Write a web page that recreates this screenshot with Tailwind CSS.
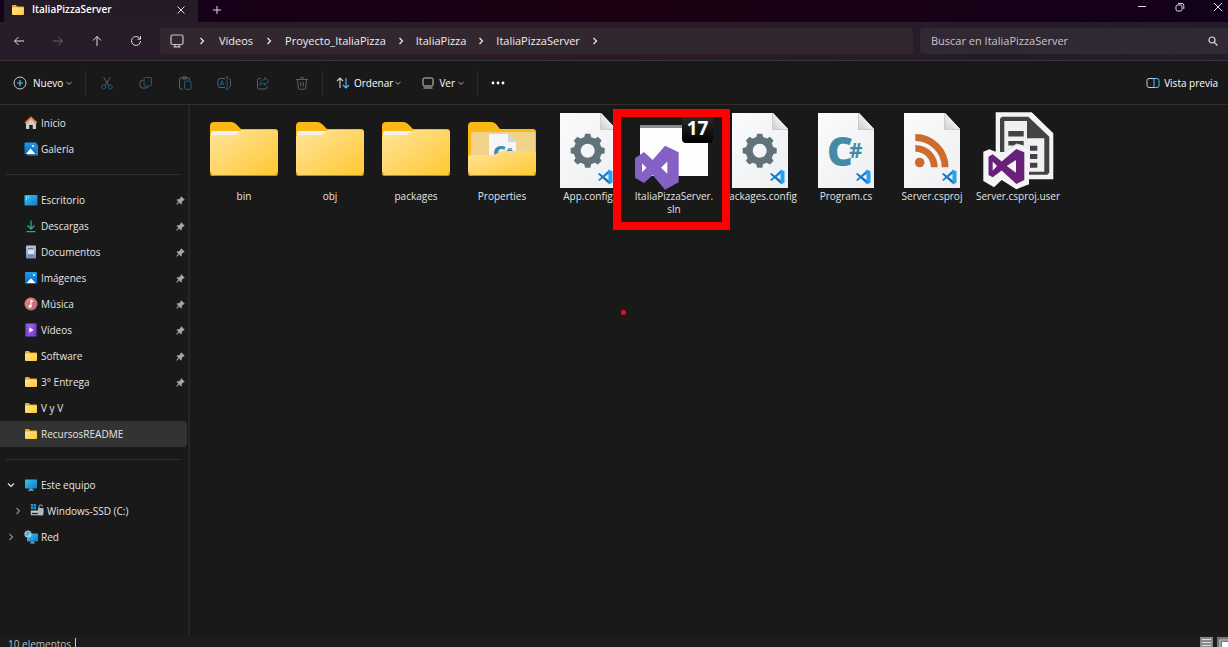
<!DOCTYPE html>
<html lang="es">
<head>
<meta charset="utf-8">
<title>ItaliaPizzaServer</title>
<script src="https://cdn.jsdelivr.net/npm/@tailwindcss/browser@4"></script>
</head>
<body class="flex h-screen flex-col overflow-hidden bg-[#191919] font-['Open_Sans','Noto_Sans',sans-serif] text-[10px] text-[#e4e4e4]">

<svg class="absolute size-0" aria-hidden="true">
  <defs>
    <linearGradient id="gFolder" x1="0" y1="0" x2="1" y2="1"><stop offset="0" stop-color="#ffe59c"/><stop offset="1" stop-color="#ffc730"/></linearGradient>
    <linearGradient id="gPaper" x1="0" y1="0" x2="1" y2="1"><stop offset="0" stop-color="#fbfbfc"/><stop offset="1" stop-color="#eeeff1"/></linearGradient>
    <linearGradient id="gFold" x1="0" y1="1" x2="1" y2="0"><stop offset="0" stop-color="#cfcfcf"/><stop offset=".6" stop-color="#f4f4f4"/></linearGradient>
    <linearGradient id="gBlue" x1="0" y1="0" x2="1" y2="1"><stop offset="0" stop-color="#35c8e8"/><stop offset="1" stop-color="#1277cf"/></linearGradient>
    <linearGradient id="gPic" x1="0" y1="0" x2="0" y2="1"><stop offset="0" stop-color="#1f9bea"/><stop offset="1" stop-color="#0a66c0"/></linearGradient>
    <linearGradient id="gMusic" x1="0" y1="0" x2="1" y2="1"><stop offset="0" stop-color="#f2895a"/><stop offset="1" stop-color="#a9609c"/></linearGradient>
    <linearGradient id="gVideo" x1="0" y1="0" x2="1" y2="1"><stop offset="0" stop-color="#a566ec"/><stop offset="1" stop-color="#7a3bd6"/></linearGradient>
    <linearGradient id="gDoc" x1="0" y1="0" x2="0" y2="1"><stop offset="0" stop-color="#b5c7dc"/><stop offset="1" stop-color="#768fae"/></linearGradient>
    <linearGradient id="gBadge" x1="0" y1="0" x2="0" y2="1"><stop offset="0" stop-color="#333"/><stop offset="1" stop-color="#000"/></linearGradient>
  </defs>
  <symbol id="folder" viewBox="0 0 86 80">
    <path d="M9 16q0-4 4-4h17q3 0 5 2l5 5h34q3 0 3 3v20H9z" fill="#fbb915"/>
    <path d="M11 23q0-2 2-2h27l-4 4-25 2z" fill="#f3f1ee"/>
    <path d="M10 23q0-2 2-2h28l-6 5-24 4z" fill="#f3f1ee"/>
    <path d="M9 28q0-3 3-3h21q2 0 3-1l3-3q1-1 3-1h32q3 0 3 3v40q0 3-3 3H12q-3 0-3-3z" fill="url(#gFolder)"/>
    <path d="M9.500 62q0 3.500 3 3.500h61q3 0 3-3.500" fill="none" stroke="#b98a1c"/>
  </symbol>
  <symbol id="folderFull" viewBox="0 0 86 80">
    <path d="M9 16q0-4 4-4h19q3 0 5 2l4 5h33q3 0 3 3v30H9z" fill="#fbb915"/>
    <path d="M12 24q0-2 2-2h60q2 0 2 2v22H12z" fill="#f1d28a"/>
    <path d="M30 24h19l8 8v16H30z" fill="#f5f6f7"/><path d="M49 24v8h8z" fill="#d2d4d6"/>
    <text x="34" y="50" font-size="20" font-weight="800" fill="#448ba8">C</text>
    <text x="47" y="46" font-size="10" font-weight="800" fill="#448ba8">#</text>
    <path d="M9 48q0-3 3-3h21q2 0 4-1l3-2q1-1 3-1h31q3 0 3 3v19q0 3-3 3H12q-3 0-3-3z" fill="url(#gFolder)"/>
    <path d="M9.500 62q0 3.500 3 3.500h61q3 0 3-3.500" fill="none" stroke="#b98a1c"/>
  </symbol>
  <symbol id="vscode" viewBox="0 0 16 16">
    <path d="M1 5l1.300-1L12 11.500V15z" fill="#0a6fc0"/><path d="M1 11l1.300 1L12 4.500V1z" fill="#1384d8"/>
    <path d="M11.500.500L15.500 2.200v11.600L11.500 15.500z" fill="#27a0f0"/>
  </symbol>
  <symbol id="paper" viewBox="0 0 86 80">
    <path d="M15 3h41l15 16v59H15z" fill="url(#gPaper)"/>
    <path d="M56 3l15 16H56z" fill="url(#gFold)"/><path d="M55.500 3v16.500H71" fill="none" stroke="#c2c2c2" stroke-width=".8"/>
    <path d="M56.500 2l16 17V2z" fill="#191919"/>
    <use href="#vscode" x="52" y="59" width="16" height="16"/>
  </symbol>
  <symbol id="config" viewBox="0 0 86 80">
    <use href="#paper" width="86" height="80"/>
    <g fill="#62727a" transform="translate(42.700 40.700)">
      <circle r="10.500" fill="none" stroke="#62727a" stroke-width="7"/>
      <g id="teeth"><path d="M-3.600-13l1-4h5.200l1 4zM-3.600 13l1 4h5.200l1-4z"/><path d="M-13-3.600l-4 1v5.200l4 1zM13-3.600l4 1v5.200l-4 1z"/></g>
      <use href="#teeth" transform="rotate(45)"/>
    </g>
  </symbol>
  <symbol id="csharp" viewBox="0 0 86 80">
    <use href="#paper" width="86" height="80"/>
    <text x="24" y="56" font-size="40" font-weight="800" fill="#448ba8">C</text>
    <text x="46" y="48" font-size="21" font-weight="700" fill="#448ba8">#</text>
  </symbol>
  <symbol id="rss" viewBox="0 0 86 80">
    <use href="#paper" width="86" height="80"/>
    <circle cx="30.700" cy="52.500" r="4.800" fill="#cc6d2e"/>
    <path d="M26.300 38.300a19 19 0 0 1 19 19M26.300 27.500a29.800 29.800 0 0 1 29.800 29.800" fill="none" stroke="#cc6d2e" stroke-width="6.800"/>
  </symbol>
  <symbol id="sln" viewBox="0 0 86 80">
    <path d="M9 15h68v51H9z" fill="#fdfdfd"/><path d="M9 15h68v3H9z" fill="#8b8b8f"/>
    <rect x="51" y="2" width="31" height="31" rx="4" fill="url(#gBadge)"/>
    <text x="66.500" y="25" text-anchor="middle" font-size="19" font-weight="700" fill="#fff">17</text>
    <path fill-rule="evenodd" fill="#8661c5" d="M34 35.700l13.700 6.600v30L34 79.700 21.700 65 13 73l-9-5.300V48.300L13 42l8.700 8z"/>
    <path d="M11 53.300l4.500 4.500-4.500 4.500zM36.300 51.500L30 57.700l6.300 6z" fill="#fff"/>
  </symbol>
  <symbol id="user" viewBox="0 0 86 80">
    <path d="M20.700 2.300h36l21.600 21v46H54v5l-12.700 5L26.700 70 19 77.300 8.300 71V41.700l6-2.400 6.400 2.400z" fill="#f4f4f5"/>
    <path d="M27 6.700h26.300l21 20v36l-2 2H54V40l-12.700-5L25 46V8.700z" fill="#424244"/>
    <path d="M29.300 11H52v17.300h17.300v33.400H52V40l-10.700-6-12 9z" fill="#f0eff1"/>
    <path d="M20.700 42h9.600l11-8L54 39.500V70L41 78z" fill="#f4f4f5"/>
    <path d="M33.300 21h15.400v5.500H33.300zM33.300 31h15.400v4.500l-7-2-3.500 2h-4.900zM55 35.700h7.300v5H55zM55 44h7.300v5H55zM55 52.700h7.300v5H55z" fill="#424244"/>
    <path fill-rule="evenodd" fill="#68217a" d="M41.300 39l8 3.300V70l-8 4-14.600-13.500-9 6.800-4.200-2.300V46.700l4.200-2.500 9 7.300zM41 50l-9.300 6 9.300 6.700zM17.700 51.500v9.200l4.300-4.700z"/>
  </symbol>

  <symbol id="miniFolder" viewBox="0 0 14 14"><path d="M1 3q0-1 1-1h3l1 1.500h6q1 0 1 1V8H1z" fill="#f2ae14"/><path d="M1 5.500q0-1 1-1h10q1 0 1 1V11q0 1-1 1H2q-1 0-1-1z" fill="url(#gFolder)"/></symbol>
  <symbol id="home" viewBox="0 0 14 14"><path d="M2 6l5-4 5 4v7H8.700V9H5.300v4H2z" fill="#cbcbcb"/><path d="M1.200 7L7 1.500 12.800 7" fill="none" stroke="#ea7a2b" stroke-width="1.800"/></symbol>
  <symbol id="gallery" viewBox="0 0 14 14"><rect x="3" y="2.500" width="11" height="11" rx="1" fill="#4f7fae"/><rect x=".5" y=".5" width="12" height="12" rx="1" fill="url(#gPic)"/><path d="M2 12l4.500-5.500L11.500 12z" fill="#fff"/><circle cx="9" cy="4" r="1" fill="#fff"/></symbol>
  <symbol id="picture" viewBox="0 0 14 14"><rect x="1" y="1" width="12" height="12" rx="1" fill="url(#gPic)"/><path d="M2.500 12L7 7.300 11.500 12z" fill="#fff"/><circle cx="10" cy="4" r="1" fill="#fff"/></symbol>
  <symbol id="desktop" viewBox="0 0 14 14"><rect x=".5" y="2" width="13" height="10.500" rx="1" fill="url(#gBlue)"/><path d="M2 4h1v1H2zM2 6h1v1H2zM4 4h1v1H4z" fill="#d9f6ff"/></symbol>
  <symbol id="download" viewBox="0 0 14 14"><path d="M7 1.500v8M3.500 6.500L7 10l3.500-3.500M2.500 12.700h9" fill="none" stroke="#1fb08a" stroke-width="1.300"/></symbol>
  <symbol id="document" viewBox="0 0 14 14"><rect x="2" y=".5" width="10" height="13" rx="1" fill="url(#gDoc)"/><path d="M4 5h6v4H4z" fill="#d9e4ef"/><path d="M4 3.500h5M4 10.800h5" stroke="#5f7da3"/></symbol>
  <symbol id="music" viewBox="0 0 14 14"><circle cx="7" cy="7" r="6.500" fill="url(#gMusic)"/><circle cx="6" cy="9.200" r="1.500" fill="#fff"/><path d="M7 9V3.500l2.300 1" fill="none" stroke="#fff" stroke-width="1.200"/></symbol>
  <symbol id="video" viewBox="0 0 14 14"><rect x="1.500" y=".5" width="11" height="13" rx="1" fill="url(#gVideo)"/><path d="M3 1.500v11M11 1.500v11" stroke="#4b1f96" stroke-dasharray="1.200 1.500"/><path d="M5.300 4.500L9.700 7 5.300 9.500z" fill="#fff"/></symbol>
  <symbol id="pc" viewBox="0 0 14 14"><rect x="1" y="1.500" width="12" height="9" rx=".8" fill="url(#gBlue)"/><path d="M5.500 10.500h3v1.200H10v1H4v-1h1.500z" fill="#8aa0ad"/></symbol>
  <symbol id="disk" viewBox="0 0 14 14"><path d="M.8 6.500h12.400v4.800H.8z" fill="#c6c9cb"/><path d="M1.800 8.800h6v1.400h-6z" fill="#222"/><path d="M.8 0h2.400v2.400H.8zM3.700 0h2.400v2.400H3.700zM.8 2.900h2.400v2.400H.8zM3.700 2.900h2.400v2.400H3.700z" fill="#1a97e0"/><path d="M9 4V2.500q0-1.500 1.700-1.500t1.700 1.500" fill="none" stroke="#b7c3cc"/><path d="M8 4h5.500v4.500q0 2-2.700 3-2.800-1-2.800-3z" fill="#a5bccd"/></symbol>
  <symbol id="net" viewBox="0 0 14 14"><rect x="3" y="3.500" width="11" height="8" rx=".8" fill="url(#gBlue)"/><path d="M7 11.500h3v1.200h1v.8H6v-.8h1z" fill="#8aa0ad"/><circle cx="4" cy="4" r="3.600" fill="#9dcbe2"/><path d="M2 2l2.500.5L4 5 1.500 4.500M5.500 1.500l1.500 2" fill="none" stroke="#3c88b4"/></symbol>
  <symbol id="pin" viewBox="0 0 10 10"><path d="M5.800.4l3.900 3.900-1.100.7-.6-.1-1.600 1.700.1 1.900-.9.900-2.100-2.100L1 9.700.3 9l2.400-2.500L.600 4.400l.9-.9 1.900.1L5.100 2l-.1-.6z" fill="#a0a8ae"/></symbol>
  <symbol id="chevR" viewBox="0 0 8 8"><path d="M2.500 1L5.500 4l-3 3" fill="none" stroke="currentColor" stroke-width="1.200"/></symbol>
  <symbol id="chevD" viewBox="0 0 8 8"><path d="M1 2.500L4 5.500l3-3" fill="none" stroke="currentColor" stroke-width="1.200"/></symbol>
  <symbol id="chevS" viewBox="0 0 8 8"><path d="M1.500 3L4 5.300 6.500 3" fill="none" stroke="currentColor"/></symbol>
</svg>

<header class="shrink-0">
  <div class="flex h-[22px] items-start bg-linear-to-r from-[#14001a] via-[#1b0012] to-[#13001a]">
    <div class="ml-1 flex h-[22px] w-[194px] items-center bg-[#241b27] pr-[11px] pb-[3px] pl-[7px]">
      <svg class="size-[14px]"><use href="#miniFolder"/></svg>
      <span class="ml-[7px] flex-1 text-[10px] font-semibold text-white">ItaliaPizzaServer</span>
      <button aria-label="Cerrar pestaña" class="size-3"><svg viewBox="0 0 12 12" class="size-3" fill="none" stroke="#ddd"><path d="M2.500 2.500l7 7M9.500 2.500l-7 7"/></svg></button>
    </div>
    <button aria-label="Nueva pestaña" class="mt-1 ml-[13px] size-3"><svg viewBox="0 0 12 12" class="size-3" fill="none" stroke="#ddd"><path d="M6 2v8M2 6h8"/></svg></button>
    <div class="mt-px ml-auto flex gap-[26px] pr-1">
      <button aria-label="Minimizar" class="size-3"><svg viewBox="0 0 12 12" class="size-3" fill="none" stroke="#ddd"><path d="M2 5.500h8"/></svg></button>
      <button aria-label="Restaurar" class="size-3"><svg viewBox="0 0 12 12" class="size-3" fill="none" stroke="#ddd"><rect x="2" y="4" width="6" height="6" rx="1.500"/><path d="M4 2.500h4q1.800 0 1.800 1.800V8"/></svg></button>
      <button aria-label="Cerrar" class="size-3"><svg viewBox="0 0 12 12" class="size-3" fill="none" stroke="#ddd"><path d="M2 2l8 8M10 2l-8 8"/></svg></button>
    </div>
  </div>

  <div class="flex h-[39px] items-center border-b border-[#39343a] bg-linear-to-r from-[#261c2a] via-[#2a1a26] to-[#231d2a] pl-[13px]">
    <div class="flex w-[147px] gap-[27px] text-[#ddd]">
      <button aria-label="Atrás" class="size-3"><svg viewBox="0 0 12 12" class="size-3" fill="none" stroke="currentColor"><path d="M11 6H1.500M5.500 2l-4 4 4 4"/></svg></button>
      <button aria-label="Adelante" class="size-3 text-[#6a616c]"><svg viewBox="0 0 12 12" class="size-3" fill="none" stroke="currentColor"><path d="M1 6h9.500M6.500 2l4 4-4 4"/></svg></button>
      <button aria-label="Arriba" class="size-3"><svg viewBox="0 0 12 12" class="size-3" fill="none" stroke="currentColor"><path d="M6 11V1.500M2 5.500l4-4 4 4"/></svg></button>
      <button aria-label="Actualizar" class="size-3"><svg viewBox="0 0 12 12" class="size-3" fill="none" stroke="currentColor"><path d="M10.500 6A4.500 4.500 0 1 1 9.200 2.800L10.300 4M10.500 1v3.200H7.500"/></svg></button>
    </div>
    <nav aria-label="Ruta" class="flex h-[26px] flex-1 items-center rounded bg-[#33272f] pl-[10px] text-[11px] text-[#eee]">
      <svg viewBox="0 0 14 14" class="size-[14px]" fill="none" stroke="#c9c3ca" stroke-width="1.200"><rect x="1" y="1" width="12" height="9.500" rx="1.500"/><path d="M3.500 12.800h7M5 10.500v2M9 10.500v2"/></svg>
      <svg class="mr-[13px] ml-[14px] size-2"><use href="#chevR"/></svg>
      <a href="#">Vídeos</a><svg class="mx-3 size-2"><use href="#chevR"/></svg>
      <a href="#">Proyecto_ItaliaPizza</a><svg class="mx-[11px] size-2"><use href="#chevR"/></svg>
      <a href="#">ItaliaPizza</a><svg class="mx-[11px] size-2"><use href="#chevR"/></svg>
      <a href="#">ItaliaPizzaServer</a><svg class="mx-[11px] size-2"><use href="#chevR"/></svg>
    </nav>
    <label class="ml-[7px] flex h-[26px] w-[308px] items-center rounded-l bg-[#302832] pr-[9px] pl-[11px]">
      <input type="text" aria-label="Buscar" placeholder="Buscar en ItaliaPizzaServer" class="min-w-0 flex-1 bg-transparent text-[11px] outline-none placeholder:text-[#c9c4ca]">
      <svg viewBox="0 0 12 12" class="size-3" fill="none" stroke="#ddd" stroke-width="1.200"><circle cx="5" cy="5" r="3"/><path d="M7.300 7.300L10.500 10.500"/></svg>
    </label>
  </div>

  <div class="flex h-11 items-center border-b border-[#303030] pt-px pr-[10px] pl-[13px] text-white">
    <button class="flex w-[72px] items-center">
      <svg viewBox="0 0 14 14" class="size-[14px]" fill="none" stroke="#ccc"><circle cx="7" cy="7" r="6"/><path d="M7 4v6M4 7h6" stroke="#4cc2ff" stroke-width="1.200"/></svg>
      <span class="mr-[2px] ml-[6px]">Nuevo</span><svg class="size-2 text-[#aaa]"><use href="#chevS"/></svg>
    </button>
    <div class="flex h-[26px] items-center gap-[25px] border-x border-[#2b2b2b] px-[13px] pl-[14px]">
      <button aria-label="Cortar" class="size-[14px]" disabled><svg viewBox="0 0 14 14" fill="none" stroke="#5e5e5e"><path d="M3.500 1l5.500 8.500M10.500 1L5 9.500"/><g stroke="#1f5e7e"><circle cx="3.700" cy="11" r="2"/><circle cx="10.300" cy="11" r="2"/></g></svg></button>
      <button aria-label="Copiar" class="size-[14px]" disabled><svg viewBox="0 0 14 14" fill="none"><path d="M4 4.500H3q-2 0-2 2V10q0 2 2 2h4q2 0 2-1.500" stroke="#5e5e5e"/><rect x="5" y="1.500" width="7.500" height="8.500" rx="1.500" stroke="#1f5e7e"/></svg></button>
      <button aria-label="Pegar" class="size-[14px]" disabled><svg viewBox="0 0 14 14" fill="none"><path d="M5 13H2.500Q1.500 13 1.500 12V3q0-1 1-1h8q1 0 1 1v1" stroke="#5e5e5e"/><rect x="4" y=".8" width="5" height="2.200" rx="1" stroke="#5e5e5e"/><rect x="6.500" y="5" width="6.500" height="8.300" rx="1" stroke="#1f5e7e"/></svg></button>
      <button aria-label="Cambiar nombre" class="size-[14px]" disabled><svg viewBox="0 0 14 14" fill="none" stroke="#5e5e5e"><path d="M8 2.500H3q-2 0-2 2v5q0 2 2 2h5M12 2.500q1.500.5 1.500 2v5q0 1.500-1.500 2"/><path d="M10 .8v12.400M8.500.8h3M8.500 13.200h3M3 9.500l2-5 2 5M3.600 8h2.800" stroke="#1f5e7e"/></svg></button>
      <button aria-label="Compartir" class="size-[14px]" disabled><svg viewBox="0 0 14 14" fill="none"><path d="M5 2.500H3.500q-2 0-2 2V11q0 2 2 2H9q2 0 2-2v-1" stroke="#5e5e5e"/><path d="M8.500 1.500L13 5.300 8.500 9V7Q5.500 7 4 9.500 4.200 4 8.500 3.700z" stroke="#1f5e7e"/></svg></button>
      <button aria-label="Eliminar" class="size-[14px]" disabled><svg viewBox="0 0 14 14" fill="none" stroke="#5e5e5e"><path d="M1 3.500h12M5 3.300q0-2 2-2t2 2M2.500 3.500l.8 8.500q.1 1.300 1.500 1.300h4.400q1.400 0 1.500-1.300l.8-8.500M5.700 6v4.500M8.300 6v4.500"/></svg></button>
    </div>
    <button class="ml-[13px] flex items-center">
      <svg viewBox="0 0 14 14" class="size-[14px]" fill="none" stroke="#ccc" stroke-width="1.100"><path d="M4 12V2M1 5l3-3 3 3"/><path d="M10 2v10M7 9l3 3 3-3" stroke="#4cc2ff"/></svg>
      <span class="mr-px ml-1">Ordenar</span><svg class="size-2 text-[#aaa]"><use href="#chevS"/></svg>
    </button>
    <button class="ml-[19px] flex items-center">
      <svg viewBox="0 0 14 14" class="size-[14px]" fill="none" stroke="#ccc"><rect x="2" y="2" width="10" height="8" rx="1.200"/><path d="M2.500 12h9"/></svg>
      <span class="mr-[2px] ml-1">Ver</span><svg class="size-2 text-[#aaa]"><use href="#chevS"/></svg>
    </button>
    <button aria-label="Más opciones" class="ml-3 flex h-[26px] items-center border-l border-[#2b2b2b] pl-3"><svg viewBox="0 0 16 4" class="h-1 w-4" fill="#fff"><circle cx="3" cy="2" r="1.400"/><circle cx="8" cy="2" r="1.400"/><circle cx="13" cy="2" r="1.400"/></svg></button>
    <button class="ml-auto flex items-center gap-1">
      <svg viewBox="0 0 14 14" class="size-[14px]" fill="none"><path d="M8 2.500H3q-2 0-2 2v5q0 2 2 2h5" stroke="#ccc"/><path d="M8 2.500h3q2 0 2 2v5q0 2-2 2H8z" stroke="#4cc2ff"/></svg>
      <span>Vista previa</span>
    </button>
  </div>
</header>

<main class="flex min-h-0 flex-1">
  <nav aria-label="Panel de navegación" class="w-[190px] shrink-0 overflow-hidden border-r-2 border-[#262626] pt-[5px]">
    <a href="#" class="flex h-[26px] items-center gap-[3px] pl-6"><svg class="size-[14px]"><use href="#home"/></svg>Inicio</a>
    <a href="#" class="flex h-[26px] items-center gap-[3px] pl-6"><svg class="size-[14px]"><use href="#gallery"/></svg>Galería</a>
    <hr class="mt-3 mr-[7px] mb-3 ml-[6px] border-[#2f2f2f]">
    <a href="#" class="flex h-[26px] items-center gap-[3px] pl-6"><svg class="size-[14px]"><use href="#desktop"/></svg><span class="flex-1">Escritorio</span><svg class="mr-[3px] size-[9px]"><use href="#pin"/></svg></a>
    <a href="#" class="flex h-[26px] items-center gap-[3px] pl-6"><svg class="size-[14px]"><use href="#download"/></svg><span class="flex-1">Descargas</span><svg class="mr-[3px] size-[9px]"><use href="#pin"/></svg></a>
    <a href="#" class="flex h-[26px] items-center gap-[3px] pl-6"><svg class="size-[14px]"><use href="#document"/></svg><span class="flex-1">Documentos</span><svg class="mr-[3px] size-[9px]"><use href="#pin"/></svg></a>
    <a href="#" class="flex h-[26px] items-center gap-[3px] pl-6"><svg class="size-[14px]"><use href="#picture"/></svg><span class="flex-1">Imágenes</span><svg class="mr-[3px] size-[9px]"><use href="#pin"/></svg></a>
    <a href="#" class="flex h-[26px] items-center gap-[3px] pl-6"><svg class="size-[14px]"><use href="#music"/></svg><span class="flex-1">Música</span><svg class="mr-[3px] size-[9px]"><use href="#pin"/></svg></a>
    <a href="#" class="flex h-[26px] items-center gap-[3px] pl-6"><svg class="size-[14px]"><use href="#video"/></svg><span class="flex-1">Vídeos</span><svg class="mr-[3px] size-[9px]"><use href="#pin"/></svg></a>
    <a href="#" class="flex h-[26px] items-center gap-[3px] pl-6"><svg class="size-[14px]"><use href="#miniFolder"/></svg><span class="flex-1">Software</span><svg class="mr-[3px] size-[9px]"><use href="#pin"/></svg></a>
    <a href="#" class="flex h-[26px] items-center gap-[3px] pl-6"><svg class="size-[14px]"><use href="#miniFolder"/></svg><span class="flex-1">3° Entrega</span><svg class="mr-[3px] size-[9px]"><use href="#pin"/></svg></a>
    <a href="#" class="flex h-[26px] items-center gap-[3px] pl-6"><svg class="size-[14px]"><use href="#miniFolder"/></svg>V y V</a>
    <a href="#" aria-current="page" class="mr-px flex h-[26px] items-center gap-[3px] rounded-r-sm bg-[#333] pl-6"><svg class="size-[14px]"><use href="#miniFolder"/></svg>RecursosREADME</a>
    <hr class="mt-3 mr-[7px] mb-3 ml-[6px] border-[#2f2f2f]">
    <a href="#" class="flex h-[26px] items-center gap-[3px] pl-[7px]"><svg class="mr-[6px] size-2"><use href="#chevD"/></svg><svg class="size-[14px]"><use href="#pc"/></svg>Este equipo</a>
    <a href="#" class="flex h-[26px] items-center gap-[3px] pl-[14px]"><svg class="mr-[5px] size-2 text-[#888]"><use href="#chevR"/></svg><svg class="size-[14px]"><use href="#disk"/></svg>Windows-SSD (C:)</a>
    <a href="#" class="flex h-[26px] items-center gap-[3px] pl-[7px]"><svg class="mr-[6px] size-2 text-[#888]"><use href="#chevR"/></svg><svg class="size-[14px]"><use href="#net"/></svg>Red</a>
  </nav>

  <section aria-label="Archivos" class="relative min-w-0 flex-1 overflow-hidden pt-[5px] pl-[11px]">
    <ul class="flex flex-wrap text-center leading-[13px]">
      <li class="w-[86px]"><svg class="h-20 w-full"><use href="#folder"/></svg>bin</li>
      <li class="w-[86px]"><svg class="h-20 w-full"><use href="#folder"/></svg>obj</li>
      <li class="w-[86px]"><svg class="h-20 w-full"><use href="#folder"/></svg>packages</li>
      <li class="w-[86px]"><svg class="h-20 w-full"><use href="#folderFull"/></svg>Properties</li>
      <li class="w-[86px]"><svg class="h-20 w-full"><use href="#config"/></svg>App.config</li>
      <li class="relative z-10 w-[86px]"><svg class="h-20 w-full"><use href="#sln"/></svg>ItaliaPizzaServer.<br>sln
        <div class="absolute -top-px -left-[18px] h-[121px] w-[117px] border-8 border-[#fe0000]"></div>
      </li>
      <li class="w-[86px]"><svg class="h-20 w-full"><use href="#config"/></svg>packages.config</li>
      <li class="w-[86px]"><svg class="h-20 w-full"><use href="#csharp"/></svg>Program.cs</li>
      <li class="w-[86px]"><svg class="h-20 w-full"><use href="#rss"/></svg>Server.csproj</li>
      <li class="w-[86px]"><svg class="h-20 w-full"><use href="#user"/></svg>Server.csproj.user</li>
    </ul>
    <div class="absolute top-[205px] left-[431px] size-[5px] rounded-full bg-[#e81123]"></div>
  </section>
</main>

<footer class="flex h-3 shrink-0 items-start overflow-hidden bg-[#1c1c1c] pl-2">
  <span class="mt-[3px] border-r border-[#ccc] pr-1 leading-[13px] text-[#bbb]">10 elementos</span>
  <div class="mt-[2px] ml-auto flex gap-1">
    <button aria-label="Vista detalles" class="h-[10px] w-[13px]"><svg viewBox="0 0 13 10" class="h-[10px] w-[13px]"><path d="M0 0h13v10H0z" fill="#888"/><path d="M2 2.500h9M2 5.500h9M2 8.500h9" stroke="#ddd"/></svg></button>
    <button aria-label="Vista iconos" class="h-[10px] w-[11px]"><svg viewBox="0 0 11 10" class="h-[10px] w-[11px]"><path d="M0 0h11v10H0z" fill="#777"/><path d="M3 10V3h8" fill="none" stroke="#ccc"/><path d="M5 5h6v5H5z" fill="#fff"/></svg></button>
  </div>
</footer>
</body>
</html>
